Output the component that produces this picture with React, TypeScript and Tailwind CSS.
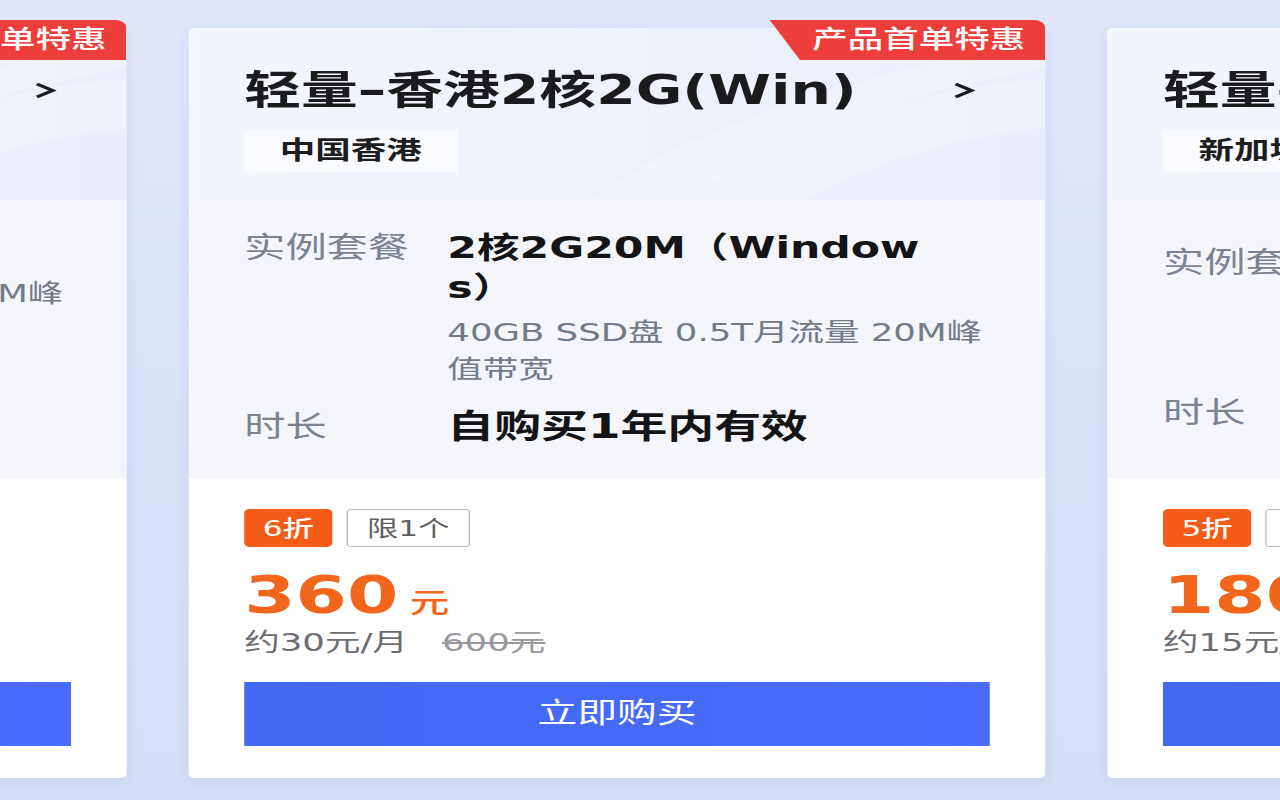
import React from 'react';

type Plan = {
  title: string;
  region: string;
  spec: string[];
  detail: string[];
  duration: string;
  discount: string;
  limit: string;
  price: string;
  monthly: string;
  original: string;
  bodyPad: string;
  durationGap: string;
};

const plans: Plan[] = [
  {
    title: '轻量–香港2核2G(Linux)',
    region: '中国香港',
    spec: ['2核2G20M（Linux）'],
    detail: ['40GB SSD盘 0.5T月流量 20M峰', '值带宽'],
    duration: '自购买1年内有效',
    discount: '6折',
    limit: '限1个',
    price: '288',
    monthly: '约24元/月',
    original: '480元',
    bodyPad: 'pt-[29px]',
    durationGap: 'mt-[17px]',
  },
  {
    title: '轻量–香港2核2G(Win)',
    region: '中国香港',
    spec: ['2核2G20M（Window', 's）'],
    detail: ['40GB SSD盘 0.5T月流量 20M峰', '值带宽'],
    duration: '自购买1年内有效',
    discount: '6折',
    limit: '限1个',
    price: '360',
    monthly: '约30元/月',
    original: '600元',
    bodyPad: 'pt-[28px]',
    durationGap: 'mt-[17px]',
  },
  {
    title: '轻量–新加坡2核2G(Win)',
    region: '新加坡',
    spec: ['2核2G30M（Linux）'],
    detail: ['40GB SSD盘 1T月流量 30M峰值', '带宽'],
    duration: '自购买1年内有效',
    discount: '5折',
    limit: '限1个',
    price: '180',
    monthly: '约15元/月',
    original: '360元',
    bodyPad: 'pt-[43px]',
    durationGap: 'mt-[28px]',
  },
];

function Chevron() {
  return (
    <svg width="16" height="17" viewBox="0 0 16 17" className="mr-[10px] shrink-0">
      <polyline points="2,2 13,8.5 2,15" fill="none" stroke="#1b1b1d" strokeWidth="3" strokeLinejoin="miter" />
    </svg>
  );
}

function HeaderWaves() {
  return (
    <svg className="pointer-events-none absolute right-0 top-0 h-full w-[320px]" viewBox="0 0 320 172" preserveAspectRatio="none">
      <path d="M60 172 C 110 120, 190 70, 320 50 L 320 172 Z" fill="#ffffff" fillOpacity="0.2" />
      <path d="M0 172 C 60 110, 150 60, 320 10 L 320 40 C 190 75, 110 120, 70 172 Z" fill="#ffffff" fillOpacity="0.22" />
      <path d="M150 172 C 190 140, 250 110, 320 100 L 320 172 Z" fill="#e3e9f7" fillOpacity="0.4" />
    </svg>
  );
}

function PlanCard({ plan }: { plan: Plan }) {
  return (
    <div className="relative flex h-[750px] w-[603px] shrink-0 flex-col rounded-[4px] bg-white shadow-[0_2px_10px_rgba(120,140,200,0.15)]">
      {/* top ribbon */}
      <div className="absolute -top-[8px] right-0 z-10 flex h-[40px] w-[194px] items-center justify-end rounded-tr-[8px] bg-[#ee3e3b] pr-[14px] [clip-path:polygon(0_0,100%_0,100%_100%,11%_100%)]">
        <span className="text-[25px] font-medium leading-[40px] text-white">产品首单特惠</span>
      </div>

      <div className="relative h-[172px] overflow-hidden rounded-t-[4px] bg-linear-to-r from-[#f3f6fd] to-[#e9eef9] px-[39px] pt-[38px]">
        <HeaderWaves />
        <div className="relative flex h-[48px] items-center justify-between">
          <span className="text-[40px] font-bold leading-[48px] text-[#1b1b1d]">{plan.title}</span>
          <Chevron />
        </div>
        <div className="relative mt-[16px] inline-flex h-[42px] items-center bg-[#fafbfe] px-[25px] text-[25px] font-bold text-[#1d1d1f]">
          {plan.region}
        </div>
      </div>

      <div className={`h-[278px] bg-[#f4f6fc] px-[39px] ${plan.bodyPad}`}>
        <div className="flex items-start">
          <div className="w-[143px] shrink-0 text-[29px] leading-[40px] text-[#7b8291]">实例套餐</div>
          <div className="flex-1">
            {plan.spec.map((line) => (
              <div key={line} className="text-[30px] font-bold leading-[40px] text-[#141416]">{line}</div>
            ))}
            <div className="mt-[6px]">
              {plan.detail.map((line) => (
                <div key={line} className="text-[25px] leading-[37px] text-[#737a88]">{line}</div>
              ))}
            </div>
          </div>
        </div>
        <div className={`flex items-center ${plan.durationGap}`}>
          <div className="w-[143px] shrink-0 text-[29px] leading-[44px] text-[#7b8291]">时长</div>
          <div className="text-[33px] font-bold leading-[44px] text-[#141416]">{plan.duration}</div>
        </div>
      </div>

      <div className="flex-1 rounded-b-[4px] bg-white px-[39px] pt-[31px]">
        <div className="flex gap-[10px]">
          <span className="flex h-[38px] w-[62px] items-center justify-center rounded-[4px] bg-[#f35b17] text-[22px] font-medium text-white">
            {plan.discount}
          </span>
          <span className="flex h-[38px] w-[87px] items-center justify-center rounded-[3px] border border-[#b9bcc3] text-[22px] text-[#5f5f63]">
            {plan.limit}
          </span>
        </div>
        <div className="mt-[22px] flex items-baseline text-[#f2661c]">
          <span className="text-[52px] font-bold leading-[52px]">{plan.price}</span>
          <span className="ml-[8px] text-[28px] font-medium">元</span>
        </div>
        <div className="mt-[2px] text-[25px] leading-[32px] text-[#6e6e72]">
          {plan.monthly}
          <span className="ml-[24px] text-[#9a9a9e] line-through">{plan.original}</span>
        </div>
        <button className="mt-[23px] flex h-[64px] w-full items-center justify-center bg-linear-to-r from-[#4269f2] to-[#4a6bfb] text-[28px] text-white">
          立即购买
        </button>
      </div>
    </div>
  );
}

export default function App() {
  return (
    <div className="relative h-[800px] w-[1280px] overflow-hidden bg-linear-to-b from-[#e0e7fa] to-[#d5def6]">
      {/* the source page is horizontally stretched, so lay out in narrow units and stretch */}
      <div className="w-[901px] origin-top-left scale-x-[1.42] font-['DejaVu_Sans','Noto_Sans_CJK_SC',sans-serif]">
        <div className="ml-[-514px] flex gap-[44px] pt-[28px]">
          {plans.map((p) => (
            <PlanCard key={p.title} plan={p} />
          ))}
        </div>
      </div>
    </div>
  );
}
